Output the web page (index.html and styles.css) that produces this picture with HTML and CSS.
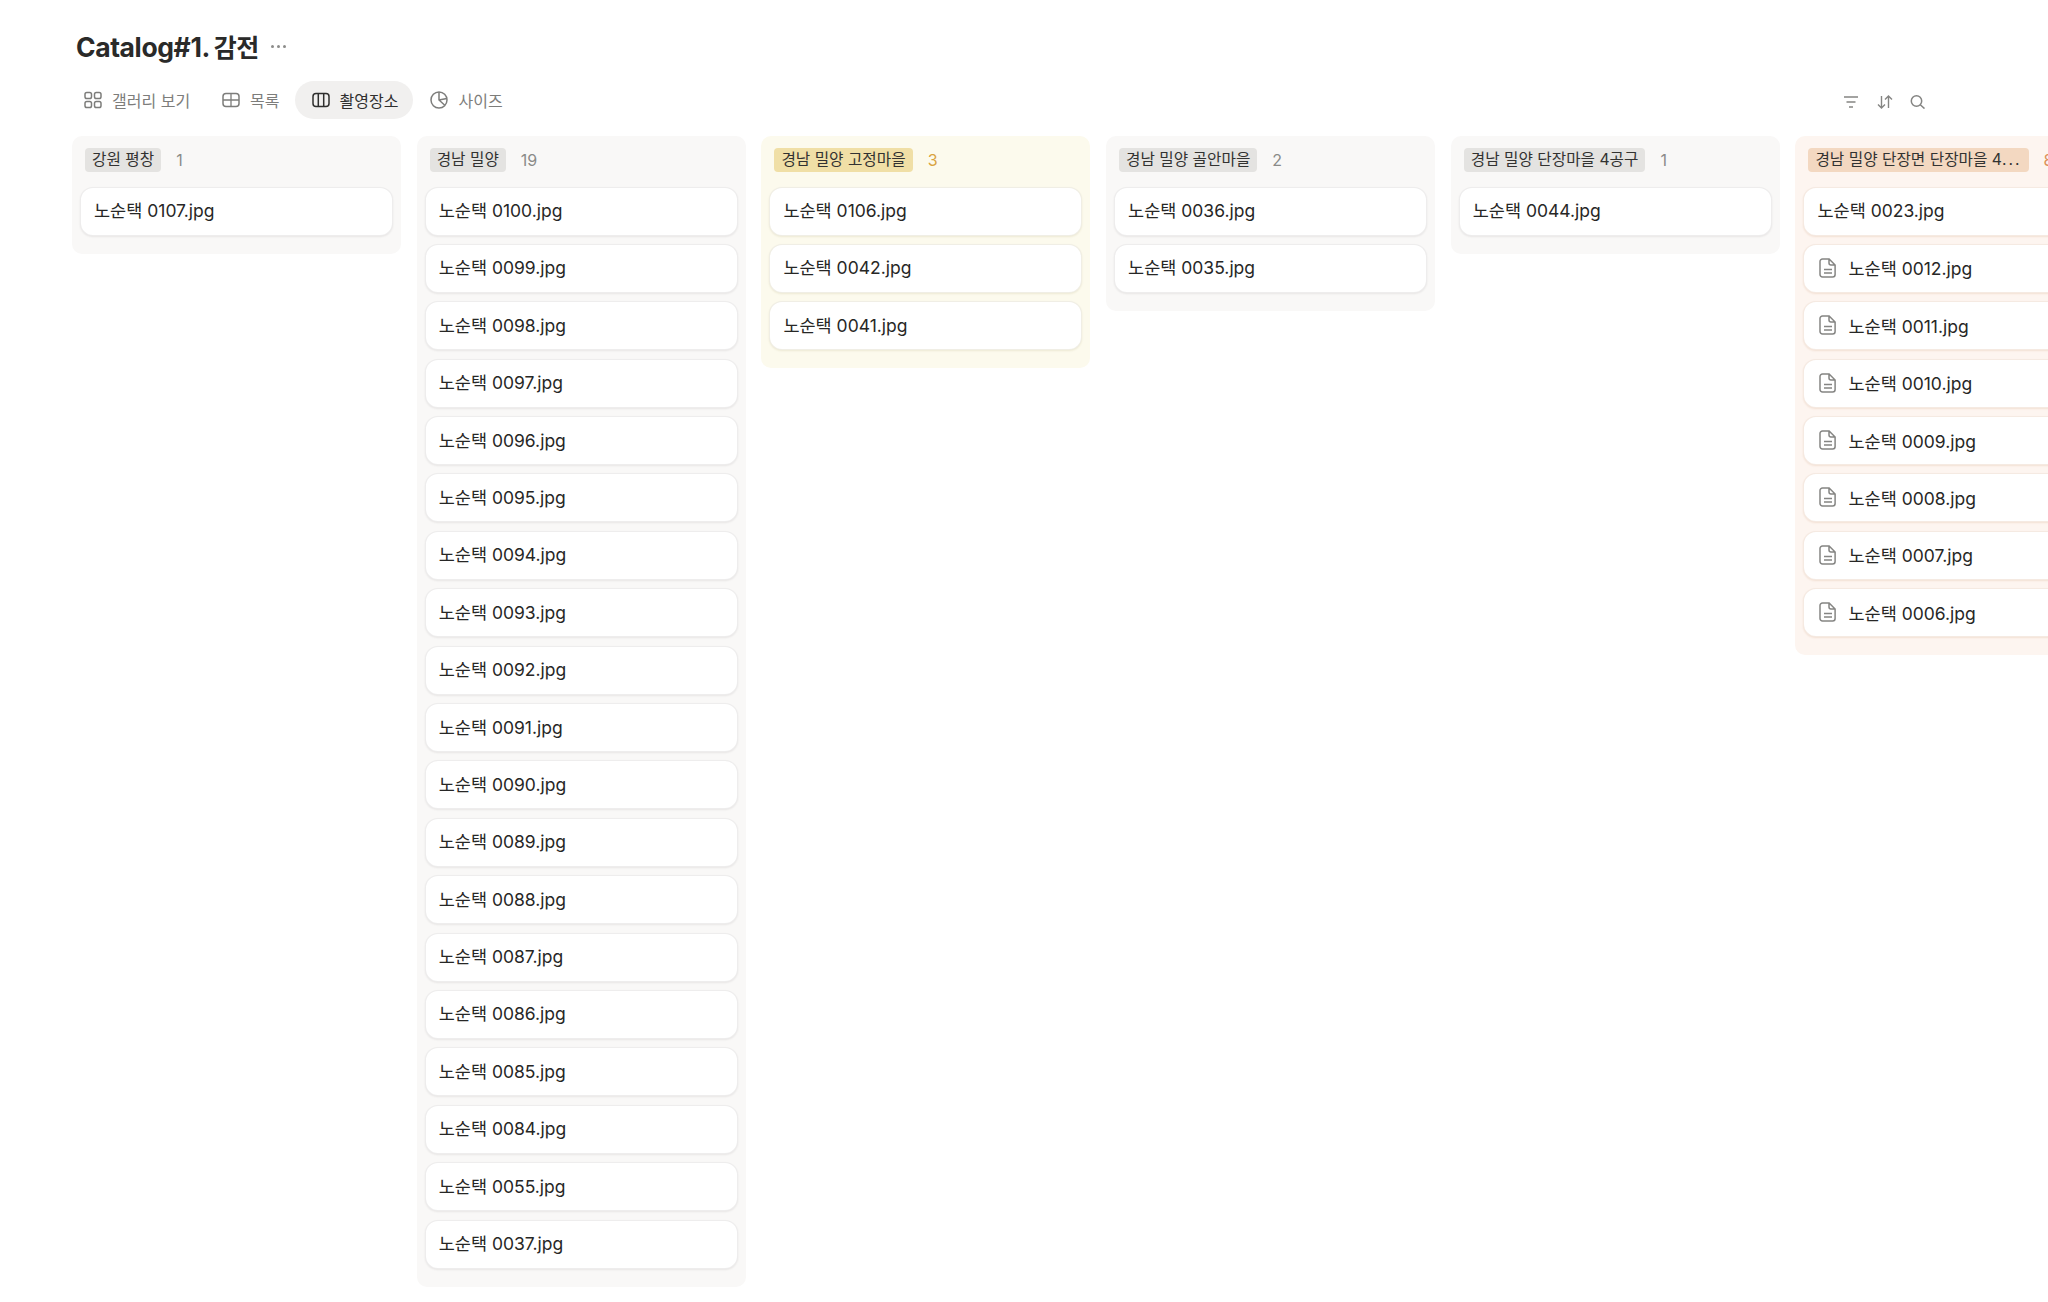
FILE: index.html
```html
<!DOCTYPE html>
<html lang="ko">
<head>
<meta charset="utf-8">
<title>Catalog#1. 감전</title>
<link rel="stylesheet" href="styles.css">
</head>
<body>
<svg class="defs" width="0" height="0" aria-hidden="true">
  <symbol id="doc" viewBox="0 0 18 20"><path d="M3.500 1h6.600l6 6v9.500a2.500 2.500 0 0 1-2.500 2.500H3.500A2.500 2.500 0 0 1 1 16.500v-13A2.500 2.500 0 0 1 3.500 1zM10 1.200v3.800a2 2 0 0 0 2 2h3.900M5 11.500h8M5 15h8" fill="none" stroke="currentColor" stroke-width="1.500"/></symbol>
</svg>
<main class="page">
  <header class="title-row">
    <h1 class="title">Catalog#1.<span class="title-ko">감전</span></h1>
    <span class="more"><i></i><i></i><i></i></span>
  </header>
  <nav class="toolbar">
    <div class="tabs">
      <a class="tab"><svg class="tab-icon" viewBox="0 0 18 18"><g fill="none" stroke="currentColor" stroke-width="1.5"><rect x="1" y="1.500" width="6.500" height="6" rx="1.800"/><rect x="10.500" y="1.500" width="6.500" height="6" rx="1.800"/><rect x="1" y="10.500" width="6.500" height="6" rx="1.800"/><rect x="10.500" y="10.500" width="6.500" height="6" rx="1.800"/></g></svg>갤러리 보기</a>
      <a class="tab"><svg class="tab-icon" viewBox="0 0 18 18"><g fill="none" stroke="currentColor" stroke-width="1.5"><rect x="1" y="2.500" width="16" height="13" rx="3"/><path d="M1 9h16M9 2.500v13" stroke-width="1.300"/></g></svg>목록</a>
      <a class="tab active"><svg class="tab-icon" viewBox="0 0 18 18"><g fill="none" stroke="currentColor" stroke-width="1.5"><rect x="1" y="2.500" width="16" height="13" rx="3"/><path d="M6.300 2.500v13M11.700 2.500v13"/></g></svg>촬영장소</a>
      <a class="tab"><svg class="tab-icon" viewBox="0 0 18 18"><g fill="none" stroke="currentColor" stroke-width="1.5"><circle cx="9" cy="9" r="8"/><path d="M9 1v8l5.800 5.200M9 9l7.800-1.600"/></g></svg>사이즈</a>
    </div>
    <div class="actions">
      <svg class="action-icon" viewBox="0 0 16 14"><path d="M1 2h14M3.500 7h9M6 12h4" fill="none" stroke="currentColor" stroke-width="1.500"/></svg>
      <svg class="action-icon" viewBox="0 0 16 14"><path d="M4.500 1v12M1 9.500l3.500 3.500L8 9.500M11.500 13V1M8 4.500L11.500 1 15 4.500" fill="none" stroke="currentColor" stroke-width="1.400"/></svg>
      <svg class="action-icon" viewBox="0 0 16 14"><circle cx="6.500" cy="6" r="5.200" fill="none" stroke="currentColor" stroke-width="1.500"/><path d="M10.300 9.700 14.500 13.600" fill="none" stroke="currentColor" stroke-width="1.500"/></svg>
    </div>
  </nav>
  <section class="board">
    <div class="column">
      <div class="col-head"><span class="tag">강원 평창</span><span class="count">1</span></div>
      <div class="cards">
        <div class="card">노순택 0107.jpg</div>
      </div>
    </div>
    <div class="column">
      <div class="col-head"><span class="tag">경남 밀양</span><span class="count">19</span></div>
      <div class="cards">
        <div class="card">노순택 0100.jpg</div>
        <div class="card">노순택 0099.jpg</div>
        <div class="card">노순택 0098.jpg</div>
        <div class="card">노순택 0097.jpg</div>
        <div class="card">노순택 0096.jpg</div>
        <div class="card">노순택 0095.jpg</div>
        <div class="card">노순택 0094.jpg</div>
        <div class="card">노순택 0093.jpg</div>
        <div class="card">노순택 0092.jpg</div>
        <div class="card">노순택 0091.jpg</div>
        <div class="card">노순택 0090.jpg</div>
        <div class="card">노순택 0089.jpg</div>
        <div class="card">노순택 0088.jpg</div>
        <div class="card">노순택 0087.jpg</div>
        <div class="card">노순택 0086.jpg</div>
        <div class="card">노순택 0085.jpg</div>
        <div class="card">노순택 0084.jpg</div>
        <div class="card">노순택 0055.jpg</div>
        <div class="card">노순택 0037.jpg</div>
      </div>
    </div>
    <div class="column yellow">
      <div class="col-head"><span class="tag">경남 밀양 고정마을</span><span class="count">3</span></div>
      <div class="cards">
        <div class="card">노순택 0106.jpg</div>
        <div class="card">노순택 0042.jpg</div>
        <div class="card">노순택 0041.jpg</div>
      </div>
    </div>
    <div class="column">
      <div class="col-head"><span class="tag">경남 밀양 골안마을</span><span class="count">2</span></div>
      <div class="cards">
        <div class="card">노순택 0036.jpg</div>
        <div class="card">노순택 0035.jpg</div>
      </div>
    </div>
    <div class="column">
      <div class="col-head"><span class="tag">경남 밀양 단장마을 4공구</span><span class="count">1</span></div>
      <div class="cards">
        <div class="card">노순택 0044.jpg</div>
      </div>
    </div>
    <div class="column orange">
      <div class="col-head"><span class="tag">경남 밀양 단장면 단장마을 4<span class="ellipsis">...</span></span><span class="count">8</span></div>
      <div class="cards">
        <div class="card">노순택 0023.jpg</div>
        <div class="card with-icon"><svg class="doc-icon"><use href="#doc"/></svg>노순택 0012.jpg</div>
        <div class="card with-icon"><svg class="doc-icon"><use href="#doc"/></svg>노순택 0011.jpg</div>
        <div class="card with-icon"><svg class="doc-icon"><use href="#doc"/></svg>노순택 0010.jpg</div>
        <div class="card with-icon"><svg class="doc-icon"><use href="#doc"/></svg>노순택 0009.jpg</div>
        <div class="card with-icon"><svg class="doc-icon"><use href="#doc"/></svg>노순택 0008.jpg</div>
        <div class="card with-icon"><svg class="doc-icon"><use href="#doc"/></svg>노순택 0007.jpg</div>
        <div class="card with-icon"><svg class="doc-icon"><use href="#doc"/></svg>노순택 0006.jpg</div>
      </div>
    </div>
  </section>
</main>
</body>
</html>
```

FILE: styles.css
```css
* { box-sizing: border-box; }

html, body {
  margin: 0;
  height: 100%;
  overflow: hidden;
  background: #fff;
}

body {
  font-family: Inter, "Noto Sans CJK KR", "Noto Sans", sans-serif;
  color: #2b2b2a;
}

.defs { position: absolute; }

.page {
  width: 2048px;
  height: 1302px;
  overflow: hidden;
  padding: 27px 0 0 72px;
}

.title-row {
  display: flex;
  align-items: center;
  gap: 12px;
  height: 40px;
  padding-left: 4px;
}

.title {
  margin: 0;
  font-size: 26.500px;
  line-height: 40px;
  font-weight: 700;
  letter-spacing: -0.4px;
  color: #2a2a29;
}

.title-ko {
  margin-left: 4px;
  font-size: 25px;
  letter-spacing: -0.5px;
}

.more {
  display: flex;
  gap: 3px;
  position: relative;
  top: -1px;
}

.more i {
  width: 3px;
  height: 3px;
  border-radius: 50%;
  background: #8c8c8a;
}

.toolbar {
  display: flex;
  align-items: center;
  justify-content: space-between;
  height: 38px;
  margin: 14px 0 0 -5px;
  padding-right: 122px;
}

.tabs { display: flex; }

.tab {
  display: flex;
  align-items: center;
  gap: 10px;
  height: 38px;
  padding: 0 15px 0 17px;
  border-radius: 19px;
  font-size: 16px;
  color: #7d7d7b;
}

.tab.active {
  background: #f1f0ef;
  color: #2f2f2e;
}

.tab-icon { width: 18px; height: 18px; flex: none; }

.actions {
  display: flex;
  gap: 17.500px;
  color: #858583;
  padding-top: 3px;
}

.action-icon { width: 16px; height: 14px; }

.board {
  display: flex;
  align-items: flex-start;
  gap: 15.700px;
  margin-top: 17px;
}

.column {
  flex: none;
  width: 329px;
  padding: 0 8px 18px;
  border-radius: 10px;
  background: #f9f8f7;
  --tag-bg: #e4e3e1;
  --count: #8b8b89;
  --edge: rgba(40, 30, 20, 0.08);
}

.column.yellow {
  background: #fcfaed;
  --tag-bg: #f0dfa6;
  --count: #d9a33f;
  --edge: rgba(120, 100, 20, 0.11);
}

.column.orange {
  background: #fdf5f0;
  --tag-bg: #f3d8c1;
  --count: #dc9159;
  --edge: rgba(180, 90, 30, 0.13);
}

.col-head {
  display: flex;
  align-items: center;
  gap: 15px;
  height: 50.500px;
  padding: 0 0 3px 5px;
}

.tag {
  height: 24px;
  padding: 0 7px;
  border-radius: 4px;
  background: var(--tag-bg);
  font-size: 15.700px;
  line-height: 24px;
  white-space: nowrap;
  color: #323231;
}

.ellipsis { letter-spacing: 2px; }

.count {
  font-size: 16px;
  color: var(--count);
}

.cards {
  display: flex;
  flex-direction: column;
  gap: 8.400px;
}

.card {
  display: flex;
  align-items: center;
  height: 49px;
  padding: 0 14px 3px 13px;
  border-radius: 13px;
  background: #fff;
  border: 1px solid var(--edge);
  box-shadow: 0 1px 2px var(--edge);
  font-size: 17.500px;
  font-weight: 400;
  color: #272726;
  white-space: nowrap;
}

.card.with-icon {
  gap: 11px;
  padding-bottom: 1px;
  padding-left: 15px;
}

.doc-icon {
  width: 18px;
  height: 20px;
  flex: none;
  color: #858583;
}
```
